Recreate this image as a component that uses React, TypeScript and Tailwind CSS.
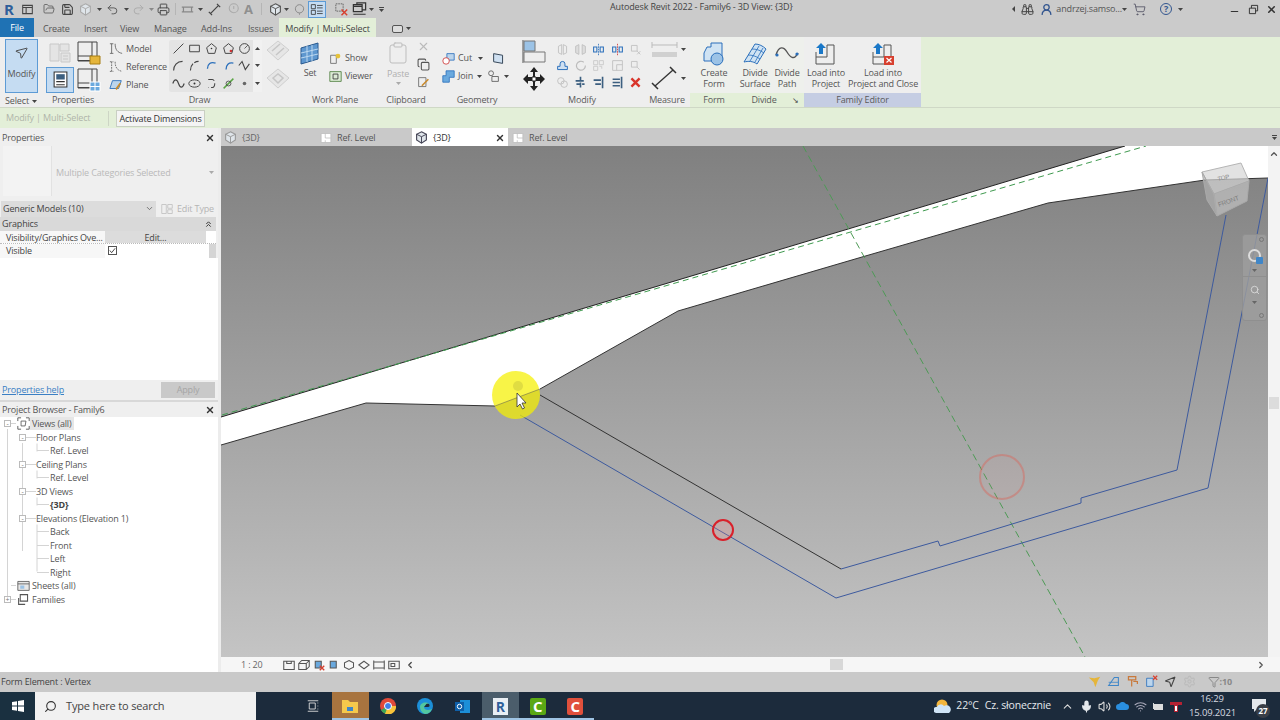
import React from "react";
import {
  Binoculars,
  ChevronLeft,
  ChevronRight,
  ChevronUp,
  Clipboard,
  Copy,
  Filter,
  FolderOpen,
  Minus,
  Mic,
  MousePointer2,
  Printer,
  Redo2,
  Save,
  Search,
  Settings,
  ShoppingCart,
  Undo2,
  UserRound,
  Volume2,
  Wifi,
  X,
} from "lucide-react";

type IcProps = { w?: number; h?: number; children: React.ReactNode };

const Ic = ({ w = 16, h = 16, children }: IcProps) => (
  <svg width={w} height={h} viewBox="0 0 16 16" fill="none" className="block shrink-0">
    {children}
  </svg>
);

const Caret = ({ c = "#444" }: { c?: string }) => (
  <svg width="5" height="3" viewBox="0 0 5 3" className="block shrink-0">
    <path d="M0 0h5L2.5 3z" fill={c} />
  </svg>
);

// toolbar + ribbon drawings
const Cube3D = ({ c = "#555" }: { c?: string }) => (
  <Ic w={13} h={13}>
    <path d="M8 1 14 4v7l-6 4-6-4V4z" fill="#dfe5ea" stroke={c} strokeWidth="1.4" />
    <path d="M2 4l6 3 6-3M8 7v8" stroke={c} strokeWidth="1.2" />
  </Ic>
);
const PlanDoc = () => (
  <Ic w={12} h={12}>
    <path d="M1.5 2h13v12h-13z" fill="#fff" stroke="#bbb" />
    <path d="M7 2v6h7.5M7 11v3" stroke="#bbb" />
  </Ic>
);
const WinPanels = ({ badge }: { badge?: React.ReactNode }) => (
  <svg width="24" height="24" viewBox="0 0 24 24" fill="none" className="block shrink-0">
    <path d="M1 1h14v14H1z" fill="#eee" stroke="#444" />
    <path d="M15 1h5v17M1 15v5h17" stroke="#444" />
    <path d="M1 19.5h12" stroke="#444" />
    {badge}
  </svg>
);
const GhostStack = () => (
  <svg width="24" height="23" viewBox="0 0 24 23" fill="none" className="block shrink-0">
    <path d="M2 3h9v17H2zM12 3h9v7h-9zM13 12h9v9h-9z" fill="#e4e4e4" stroke="#c8c8c8" />
    <path d="M15 15h5M15 18h5" stroke="#c8c8c8" />
  </svg>
);
const GhostPlane = ({ alt }: { alt?: boolean }) => (
  <svg width="24" height="23" viewBox="0 0 24 23" fill="none" className="block shrink-0">
    <path d="M1 11 12 2l11 9-11 10z" fill="#e6e6e6" stroke="#cfcfcf" />
    <path d={alt ? "M7 11l5-4 5 4-5 5z" : "M6 12l8-7M10 16l8-7"} stroke="#c6c6c6" strokeWidth="1.5" />
  </svg>
);
const ModelLine = ({ dash }: { dash?: boolean }) => (
  <Ic w={14} h={14}>
    <path d="M3 2v11M1 2h4M1 13h4" stroke="#666" strokeDasharray={dash ? "2 1" : undefined} />
    <path d="M7 2c0 7 3 10 8 11" stroke="#666" strokeDasharray={dash ? "2 1" : undefined} />
  </Ic>
);

const drawGlyphs: React.ReactNode[] = [
  <path key="a" d="M2 14 14 2" stroke="#444" strokeWidth="1.2" />,
  <path key="b" d="M2 4h12v8H2z" stroke="#444" strokeWidth="1.2" />,
  <g key="c"><path d="M8 2l6 5-2 7H4L2 7z" stroke="#444" strokeWidth="1.2" /><circle cx="8" cy="8" r="1" fill="#333" /></g>,
  <g key="d"><path d="M8 2l6 5-2 7H4L2 7z" stroke="#444" strokeWidth="1.2" /><circle cx="11" cy="11" r="1.6" fill="#c33" /></g>,
  <g key="e"><circle cx="8" cy="8" r="6" stroke="#444" strokeWidth="1.2" /><path d="M8 8l4-4" stroke="#444" /></g>,
  <path key="f" d="M2 14C2 8 6 3 13 3" stroke="#444" strokeWidth="1.4" />,
  <path key="g" d="M3 14C3 8 7 3 13 3" stroke="#444" strokeWidth="1.4" strokeDasharray="9 2" />,
  <path key="h" d="M3 12C3 6 7 3 13 5" stroke="#2a6fbb" strokeWidth="1.6" />,
  <path key="i" d="M5 13C5 7 8 4 14 5" stroke="#2a6fbb" strokeWidth="1.6" />,
  <path key="j" d="M1 8l4-5 4 10 5-7" stroke="#444" strokeWidth="1.3" />,
  <path key="k" d="M1 8c2-6 5-6 7 0s5 6 7 0" stroke="#444" strokeWidth="1.4" />,
  <g key="l"><ellipse cx="8" cy="8" rx="7" ry="4.5" stroke="#444" strokeWidth="1.2" /><circle cx="8" cy="8" r="1.2" fill="#333" /></g>,
  <path key="m" d="M4 3h5c4 0 4 10 0 10H4" stroke="#444" strokeWidth="1.3" strokeDasharray="8 3" />,
  <g key="n"><path d="M2 14 14 2" stroke="#5aa544" strokeWidth="1.8" /><circle cx="8" cy="8" r="3" stroke="#444" /></g>,
  <circle key="o" cx="8" cy="8" r="2.2" fill="#666" />,
];

const modGlyphs: React.ReactNode[] = [
  <path key="1" d="M7 2 3 4v8l4 2zM9 2l4 2v8l-4 2z" stroke="#bbb" />,
  <path key="2" d="M6 2 2 4v8l4 2zM10 2l4 2v8l-4 2z" fill="#ddd" stroke="#bbb" />,
  <g key="3"><path d="M8 1v14" stroke="#2a6fbb" strokeDasharray="2 1" /><path d="M2 5h4v6H2zM10 5h4v6h-4z" stroke="#2a6fbb" strokeWidth="1.3" /></g>,
  <g key="4"><path d="M8 1v14" stroke="#c33" strokeDasharray="2 1" /><path d="M2 5h4v6H2zM10 5h4v6h-4z" stroke="#2a6fbb" strokeWidth="1.3" /></g>,
  <path key="5" d="M3 3h7v7H3zM10 10l4 4M14 10l-4 4" stroke="#c4c4c4" strokeWidth="1.2" />,
  <path key="6" d="M2 13h12V9h-3V6a3 3 0 0 0-6 0v3H2z" fill="#cfe0f1" stroke="#2a6fbb" strokeWidth="1.2" />,
  <path key="7" d="M12 4a5.5 5.5 0 1 0 2 4" stroke="#bbb" strokeWidth="1.4" />,
  <path key="8" d="M2 2h5v5H2zM9 2h5v5H9zM2 9h5v5H2zM9 9h3v3" stroke="#c6c6c6" />,
  <path key="9" d="M2 2h12v12H2zM7 7h7M7 7v7" stroke="#bdbdbd" />,
  <path key="10" d="M3 3h7v7H3z M10 10l3 3" stroke="#c4c4c4" strokeWidth="1.2" />,
  <g key="11"><circle cx="6" cy="6" r="4" stroke="#bbb" /><circle cx="10" cy="10" r="4" stroke="#bbb" /></g>,
  <path key="12" d="M8 1v14M2 6h10M3 10h10" stroke="#3c5f80" strokeWidth="2" strokeDasharray="6 1" />,
  <path key="13" d="M13 1v14M2 5h9M4 10h7" stroke="#3c5f80" strokeWidth="2" />,
  <path key="14" d="M13 1v14M2 4h9M2 8h9M2 12h9" stroke="#3c5f80" strokeWidth="2" />,
  <path key="15" d="M3 3l10 10M13 3 3 13" stroke="#d9352b" strokeWidth="3" />,
];

const Label = ({ children }: { children: React.ReactNode }) => (
  <div className="h-[14px] leading-[14px] text-center text-[9px] text-[#5a5a5a] whitespace-nowrap">{children}</div>
);

const RowTool = ({ icon, text }: { icon: React.ReactNode; text: string }) => (
  <div className="flex items-center gap-[3px] h-[18px] text-[9px] text-[#555]">
    {icon}
    <span className="whitespace-nowrap">{text}</span>
  </div>
);

const BigTool = ({ icon, lines, w }: { icon: React.ReactNode; lines: string[]; w: string }) => (
  <div className={`flex flex-col items-center shrink-0 pt-[3px] text-[9px] leading-[11px] text-[#555] ${w}`}>
    <div className="h-[27px] flex items-center justify-center">{icon}</div>
    <div className="text-center whitespace-nowrap">
      {lines.map((l) => (
        <div key={l}>{l}</div>
      ))}
    </div>
  </div>
);

const LoadIcon = ({ close }: { close?: boolean }) => (
  <svg width="24" height="24" viewBox="0 0 24 24" fill="none" className="block shrink-0">
    <path d="M2 10v12h18V3h-7" stroke="#555" />
    <path d="M13 3v12H2" stroke="#555" />
    <path d="M7 1 2 6h3v6h4V6h3z" fill="#1a78c8" />
    {close && <path d="M13 14h10v9H13z" fill="#d7402f" />}
    {close && <path d="M15.5 16l5 4.500M20.500 16l-5 4.500" stroke="#fff" strokeWidth="1.2" />}
  </svg>
);

function TitleBar() {
  return (
    <div className="h-[18px] flex items-center relative text-[#555]">
      <div className="flex items-center pl-[4px]">
        <span className="w-[11px] text-[15px] leading-[16px] font-bold text-[#2f5f9a]">R</span>
        <span className="ml-[7px]">
          <Ic w={11} h={11}><path d="M1 2h14v12H1zM1 5h14M6 5v9" stroke="#444" strokeWidth="1.5" /></Ic>
        </span>
        <FolderOpen size={12} strokeWidth={1.6} className="ml-[10px] text-[#555]" />
        <Save size={13} strokeWidth={2} className="ml-[6px] text-[#444]" />
        <span className="ml-[5px]"><Cube3D c="#aaa" /></span>
        <span className="ml-[5px]"><Caret /></span>
        <Undo2 size={13} strokeWidth={1.7} className="ml-[4px] text-[#555]" />
        <span className="ml-[5px]"><Caret /></span>
        <Redo2 size={13} strokeWidth={1.7} className="ml-[3px] text-[#aaa]" />
        <span className="ml-[4px]"><Caret c="#888" /></span>
        <Printer size={13} strokeWidth={1.7} className="ml-[3px] text-[#444]" />
        <span className="ml-[5px] h-[12px] w-px bg-[#b5b5b5]" />
        <span className="ml-[5px]">
          <Ic w={13} h={13}><path d="M1 5h14M1 11h14M3 5v6M13 5v6" stroke="#888" strokeWidth="1.5" /></Ic>
        </span>
        <span className="ml-[4px]"><Caret /></span>
        <span className="ml-[5px]">
          <Ic w={13} h={13}><path d="M3 13 13 3M1 11l4 4M11 1l4 4" stroke="#444" strokeWidth="1.5" /></Ic>
        </span>
        <span className="ml-[6px]">
          <Ic w={12} h={12}><circle cx="9" cy="7" r="6" stroke="#aaa" strokeWidth="1.4" /><path d="M9 4v4" stroke="#aaa" strokeWidth="1.4" /></Ic>
        </span>
        <span className="ml-[5px] w-[12px] text-[13px] leading-[14px] font-bold text-[#8f8f8f]">A</span>
        <span className="ml-[5px] h-[12px] w-px bg-[#b5b5b5]" />
        <span className="ml-[7px]"><Cube3D /></span>
        <span className="ml-[2px]"><Caret /></span>
        <span className="ml-[5px]">
          <Ic w={11} h={11}><circle cx="8" cy="7" r="6" stroke="#888" strokeWidth="1.4" /><path d="M8 13v3" stroke="#888" /></Ic>
        </span>
        <span className="ml-[3px] w-[18px] h-[17px] bg-[#c5dcf2] border border-[#5d9bd5] flex items-center justify-center">
          <Ic w={14} h={13}><path d="M1 2h5v5H1zM1 9h5v5H1z" stroke="#333" /><path d="M8 3h7M8 6h7M8 10h7M8 13h7" stroke="#333" /></Ic>
        </span>
        <span className="ml-[9px]">
          <Ic w={13} h={13}><path d="M1 1h9v9H1z" stroke="#555" strokeDasharray="2 1" /><path d="M8 8l7 7M15 8l-7 7" stroke="#d7402f" strokeWidth="1.8" /></Ic>
        </span>
        <span className="ml-[4px]">
          <Ic w={15} h={14}><path d="M1 3h10v8H1zM5 3V1h10v8h-4M1 5h10M1 14h14" stroke="#333" strokeWidth="1.4" /></Ic>
        </span>
        <span className="ml-[2px]"><Caret /></span>
        <span className="ml-[5px] flex flex-col gap-[1px]">
          <span className="block w-[5px] h-px bg-[#444]" />
          <Caret />
        </span>
      </div>
      <div className="absolute left-[610px] top-[1px] text-[9px] leading-[12px] text-[#444] whitespace-nowrap">
        Autodesk Revit 2022 - Family6 - 3D View: {"{3D}"}
      </div>
      <div className="ml-auto flex items-center pr-[3px]">
        <span className="w-0 h-0 border-y-[3px] border-y-transparent border-r-[3px] border-r-[#444]" />
        <Binoculars size={13} strokeWidth={1.8} className="ml-[6px] text-[#444]" />
        <UserRound size={13} strokeWidth={2.4} className="ml-[6px] text-[#33568f]" />
        <span className="ml-[3px] text-[9px] text-[#555] whitespace-nowrap">andrzej.samso...</span>
        <Caret />
        <ShoppingCart size={13} strokeWidth={1.6} className="ml-[6px] text-[#556]" />
        <span className="ml-[14px] w-[12px] h-[12px] rounded-full border border-[#33568f] text-[9px] leading-[10px] text-center text-[#33568f] font-bold">?</span>
        <span className="ml-[6px]"><Caret /></span>
        <Minus size={11} strokeWidth={2.6} className="ml-[46px] mt-[5px] text-[#333]" />
        <span className="ml-[8px]">
          <Ic w={11} h={11}><path d="M2 6h9v8H2zM5 6V2h9v8h-3" stroke="#333" strokeWidth="1.4" /></Ic>
        </span>
        <X size={11} strokeWidth={3.4} className="ml-[7px] text-[#333]" />
      </div>
    </div>
  );
}

function RibbonTabs() {
  const tabs = [
    { t: "Create", c: "w-[41px]" },
    { t: "Insert", c: "w-[36px]" },
    { t: "View", c: "w-[34px]" },
    { t: "Manage", c: "w-[47px]" },
    { t: "Add-Ins", c: "w-[47px]" },
    { t: "Issues", c: "w-[31px]" },
  ];
  return (
    <div className="h-[19px] flex items-stretch text-[9px] text-[#555]">
      <div className="w-[34px] bg-[#1f72b4] text-white text-center leading-[20px]">File</div>
      <div className="w-[9px]" />
      {tabs.map((x) => (
        <div key={x.t} className={`${x.c} leading-[22px] whitespace-nowrap`}>{x.t}</div>
      ))}
      <div className="w-[97px] bg-[#e3efd8] text-center leading-[22px] text-[#444] whitespace-nowrap">Modify | Multi-Select</div>
      <div className="ml-[16px] flex items-center gap-[3px] pt-[2px]">
        <span className="w-[11px] h-[8px] rounded-[2px] border border-[#555] bg-[#ddd]" />
        <Caret />
      </div>
    </div>
  );
}

function Ribbon() {
  return (
    <div className="h-[71px] flex items-stretch bg-[#e3efd8] border-b border-[#cfd8c6] text-[#555]">
      {/* Select */}
      <div className="w-[46px] bg-[#eeeeee] pl-[5px] pt-[2px]">
        <div className="w-[33px] h-[54px] bg-[#c5dcf2] border border-[#5d9bd5] flex flex-col items-center pt-[5px] text-[9px] leading-[11px]">
          <MousePointer2 size={15} strokeWidth={1.4} className="text-[#444] -scale-x-100 rotate-[8deg]" />
          <span className="mt-[8px]">Modify</span>
        </div>
        <div className="mt-[1px] flex items-center gap-[3px] h-[14px] text-[9px] whitespace-nowrap">
          Select <Caret />
        </div>
      </div>
      {/* Properties */}
      <div className="w-[59px] bg-[#eeeeee]">
        <div className="h-[56px] grid grid-cols-[31px_24px] grid-rows-[27px_27px] items-center pt-[2px]">
          <div className="pl-[2px]"><GhostStack /></div>
          <WinPanels badge={<path d="M13 15h10v8H13z" fill="#e5b53a" stroke="#a67c12" />} />
          <div className="w-[28px] h-[26px] bg-[#c5dcf2] border border-[#5d9bd5] flex items-center justify-center">
            <Ic w={17} h={19}><path d="M2 1h12v14H2z" fill="#fff" stroke="#333" /><path d="M4 3h8v5H4z" fill="#3c5f80" /><path d="M4 10h8M4 13h8" stroke="#333" /></Ic>
          </div>
          <WinPanels badge={<path d="M13 14h10v9H13z M18 14v9M13 18.500h10" fill="#6aa9de" stroke="#fff" />} />
        </div>
        <div className="pr-[5px]"><Label>Properties</Label></div>
      </div>
      {/* Draw */}
      <div className="w-[189px] bg-[#eeeeee]">
        <div className="h-[56px] flex">
          <div className="w-[64px] pl-[4px] pt-[3px]">
            <RowTool icon={<ModelLine />} text="Model" />
            <RowTool icon={<ModelLine dash />} text="Reference" />
            <RowTool icon={<Ic w={14} h={14}><path d="M4 3h10l-3 9H1z" fill="#bcd5ec" stroke="#2a6fbb" /><path d="M8 13l5-7" stroke="#c98a2b" strokeWidth="2" /></Ic>} text="Plane" />
          </div>
          <div className="w-[93px] h-[52px] mt-[3px] bg-[#e4e4e4] rounded-[2px] flex">
            <div className="w-[84px] grid grid-cols-5 grid-rows-3 place-items-center pl-[1px]">
              {drawGlyphs.map((g, i) => (
                <Ic key={i} w={13} h={13}>{g}</Ic>
              ))}
            </div>
            <div className="w-[9px] bg-[#f1f1f1] flex flex-col justify-around items-center">
              <span className="rotate-180"><Caret /></span>
              <Caret />
              <Caret />
            </div>
          </div>
          <div className="ml-[4px] pt-[2px] flex flex-col gap-[5px]">
            <GhostPlane />
            <GhostPlane alt />
          </div>
        </div>
        <Label>Draw</Label>
      </div>
      {/* Work Plane */}
      <div className="w-[82px] bg-[#eeeeee]">
        <div className="h-[56px] flex">
          <BigTool
            w="w-[32px]"
            icon={
              <svg width="22" height="23" viewBox="0 0 22 23" className="block">
                <path d="M2 6 19 1v16L2 22z" fill="#5e97cf" stroke="#28598f" />
                <path d="M8 4v16M13 3v16M2 11l17-4M2 16l17-4" stroke="#bcd8f0" />
              </svg>
            }
            lines={["Set"]}
          />
          <div className="pt-[12px] ml-[3px]">
            <RowTool icon={<Ic w={13} h={13}><path d="M2 4h7v10H2z" stroke="#666" /><circle cx="11" cy="5" r="3" fill="#e5c23a" /></Ic>} text="Show" />
            <RowTool icon={<Ic w={13} h={13}><path d="M1 2h14v12H1z" fill="#dcebd5" stroke="#4a7a3a" /><path d="M5 5h6v6H5z" stroke="#333" /></Ic>} text="Viewer" />
          </div>
        </div>
        <Label>Work Plane</Label>
      </div>
      {/* Clipboard */}
      <div className="w-[60px] bg-[#eeeeee]">
        <div className="h-[56px] flex">
          <div className="ml-[7px] w-[30px] flex flex-col items-center pt-[4px] text-[9px] leading-[11px] text-[#b0b0b0]">
            <Clipboard size={24} strokeWidth={1} className="text-[#bdbdbd]" />
            <span className="mt-[3px]">Paste</span>
            <span className="mt-[3px]"><Caret c="#aaa" /></span>
          </div>
          <div className="ml-[4px] pt-[3px] flex flex-col gap-[5px] text-[#bbb]">
            <X size={13} />
            <Copy size={13} className="text-[#555]" />
            <Ic w={13} h={13}><path d="M2 2h9v11H2z" stroke="#666" /><path d="M6 12l8-8" stroke="#c98a2b" strokeWidth="2" /></Ic>
          </div>
        </div>
        <Label>Clipboard</Label>
      </div>
      {/* Geometry */}
      <div className="w-[82px] bg-[#eeeeee]">
        <div className="h-[56px] pl-[6px] pt-[12px]">
          <div className="flex items-center">
            <RowTool icon={<Ic w={13} h={13}><path d="M6 2h9v8H6z" fill="#bcd5ec" stroke="#2a6fbb" /><circle cx="5" cy="11" r="4" fill="#fff" stroke="#c33" /></Ic>} text="Cut" />
            <span className="ml-[6px]"><Caret /></span>
            <span className="ml-[9px]">
              <Ic w={13} h={13}><path d="M2 2l11 2v10L2 12z" fill="#cfe0f1" stroke="#345" strokeWidth="1.2" /></Ic>
            </span>
          </div>
          <div className="flex items-center">
            <RowTool icon={<Ic w={13} h={13}><path d="M5 1h10v8H9v6H1V7h4z" fill="#6aa9de" stroke="#2a6fbb" /></Ic>} text="Join" />
            <span className="ml-[4px]"><Caret /></span>
            <span className="ml-[5px]">
              <Ic w={13} h={13}><circle cx="5" cy="4" r="3" stroke="#555" /><path d="M6 8h8v6H6z" stroke="#555" /></Ic>
            </span>
            <span className="ml-[4px]"><Caret /></span>
          </div>
        </div>
        <Label>Geometry</Label>
      </div>
      {/* Modify */}
      <div className="w-[128px] bg-[#eeeeee]">
        <div className="h-[56px] flex">
          <div className="ml-[4px] pt-[3px] flex flex-col gap-[4px]">
            <svg width="24" height="23" viewBox="0 0 24 23" fill="none" className="block">
              <path d="M1 0v23" stroke="#555" />
              <path d="M2 1h11v10H2z" fill="#9cc3e6" stroke="#777" />
              <path d="M2 12h21v10H2z" fill="#eee" stroke="#777" />
            </svg>
            <svg width="24" height="24" viewBox="0 0 24 24" className="block">
              <path d="M12 0l4 5h-3v5h5V7l5 5-5 5v-3h-5v5h3l-4 5-4-5h3v-5H6v3l-5-5 5-5v3h5V5H8z" fill="#222" />
              <path d="M10 10h4v4h-4z" fill="#fff" stroke="#222" />
            </svg>
          </div>
          <div className="ml-[7px] mt-[4px] w-[92px] h-[50px] grid grid-cols-5 grid-rows-3 place-items-center">
            {modGlyphs.map((g, i) => (
              <Ic key={i} w={13} h={13}>{g}</Ic>
            ))}
          </div>
        </div>
        <Label>Modify</Label>
      </div>
      {/* Measure */}
      <div className="w-[44px] bg-[#eeeeee]">
        <div className="h-[56px] pl-[5px] pt-[4px]">
          <div className="flex items-center gap-[3px]">
            <svg width="27" height="17" viewBox="0 0 27 17" fill="none" className="block">
              <path d="M1 4h25M1 1v6M26 1v6" stroke="#bbb" />
              <path d="M1 11h25v5H1z" fill="#d0d0d0" />
            </svg>
            <Caret />
          </div>
          <div className="mt-[8px] flex items-center gap-[3px]">
            <svg width="27" height="24" viewBox="0 0 27 24" fill="none" className="block">
              <path d="M4 20 22 4" stroke="#333" strokeWidth="1.3" />
              <path d="M1 17l6 6M19 1l6 6" stroke="#333" strokeWidth="1.5" />
            </svg>
            <Caret />
          </div>
        </div>
        <div className="pr-[2px]"><Label>Measure</Label></div>
      </div>
      {/* Form */}
      <div className="w-[48px]">
        <div className="h-[56px] bg-[#eef0ec] flex justify-center">
          <BigTool
            w="w-[40px]"
            icon={
              <svg width="24" height="24" viewBox="0 0 24 24" className="block">
                <path d="M9 1h11v18H2v-8l3-6h4z" fill="#cfe3f3" stroke="#2a6fbb" />
                <circle cx="15" cy="17" r="6" fill="#9cc3e6" stroke="#2a6fbb" />
              </svg>
            }
            lines={["Create", "Form"]}
          />
        </div>
        <Label>Form</Label>
      </div>
      {/* Divide */}
      <div className="w-[66px]">
        <div className="h-[56px] bg-[#eef0ec] flex">
          <BigTool
            w="w-[34px]"
            icon={
              <svg width="24" height="22" viewBox="0 0 24 22" fill="none" className="block">
                <path d="M1 19 12 1c4 0 8 2 11 5L14 21c-4-3-9-3-13-2z" fill="#cfe3f3" stroke="#2a6fbb" />
                <path d="M5 12c4 0 8 1 12 4M9 6c4 0 8 1 12 4M7 18 16 3M12 19 20 5" stroke="#2a6fbb" strokeWidth=".8" />
              </svg>
            }
            lines={["Divide", "Surface"]}
          />
          <BigTool
            w="w-[30px]"
            icon={
              <svg width="24" height="16" viewBox="0 0 24 16" fill="none" className="block">
                <path d="M1 9c3-10 8-8 11-3s7 9 11 1" stroke="#555" strokeWidth="1.4" />
                <circle cx="2" cy="9" r="1.6" fill="#2a6fbb" />
                <circle cx="22" cy="8" r="1.6" fill="#2a6fbb" />
              </svg>
            }
            lines={["Divide", "Path"]}
          />
        </div>
        <div className="relative pr-[14px]"><Label>Divide</Label><span className="absolute right-[5px] top-[2px] text-[8px] leading-[10px] text-[#444]">↘</span></div>
      </div>
      {/* Family Editor */}
      <div className="w-[117px] bg-[#eeeeee]">
        <div className="h-[56px] flex">
          <BigTool w="w-[44px]" icon={<LoadIcon />} lines={["Load into", "Project"]} />
          <BigTool w="w-[70px]" icon={<LoadIcon close />} lines={["Load into", "Project and Close"]} />
        </div>
        <div className="bg-[#c5cde3] h-[14px]"><Label>Family Editor</Label></div>
      </div>
    </div>
  );
}

function TabIcon({ cube, active }: { cube?: boolean; active?: boolean }) {
  return cube ? <Cube3D c={active ? "#445" : "#999"} /> : <PlanDoc />;
}

function ViewTabs() {
  return (
    <div className="h-[18px] flex items-stretch text-[9px] text-[#555] bg-[#c9c9c9]">
      <div className="w-[95px] flex items-center pl-[3px] pt-px gap-[5px] text-[#666]"><TabIcon cube />{"{3D}"}</div>
      <div className="w-[96px] flex items-center pl-[4px] pt-px gap-[5px]"><TabIcon />Ref. Level</div>
      <div className="w-[96px] bg-white flex items-center pl-[3px] pt-px gap-[5px] text-[#333]">
        <TabIcon cube active />{"{3D}"}
        <X size={10} strokeWidth={3.4} className="ml-auto mr-[3px] text-[#333]" />
      </div>
      <div className="w-[96px] flex items-center pl-[4px] pt-px gap-[5px]"><TabIcon />Ref. Level</div>
      <div className="ml-auto pr-[3px] flex flex-col justify-center gap-px items-center">
        <span className="block w-[5px] h-px bg-[#444]" />
        <Caret />
      </div>
    </div>
  );
}

function PanelHead({ title }: { title: string }) {
  return (
    <div className="h-[14px] flex items-center justify-between pl-[2px] pr-[3px] text-[9px] text-[#555]">
      {title}
      <X size={10} strokeWidth={3.4} className="text-[#333]" />
    </div>
  );
}

function PropertiesPanel() {
  return (
    <div className="h-[274px] flex flex-col bg-[#efefef] text-[9px] text-[#555] border-b-2 border-[#d8d8d8]">
      <div className="pt-[3px]"><PanelHead title="Properties" /></div>
      <div className="h-[55px] flex">
        <div className="ml-[3px] mt-[1px] w-[49px] h-[50px] bg-[#f3f3f3] border-r border-[#e2e2e2]" />
        <div className="flex-1 flex items-center justify-between pl-[4px] pr-[4px] text-[#b9b9b9]">
          Multiple Categories Selected
          <Caret c="#aaa" />
        </div>
      </div>
      <div className="h-[17px] flex items-center">
        <div className="w-[155px] h-[16px] ml-[1px] bg-[#dcdcdc] flex items-center justify-between px-[2px] text-[#444]">
          Generic Models (10)
          <ChevronLeft size={9} className="-rotate-90 text-[#555]" />
        </div>
        <div className="ml-[5px] flex items-center gap-[4px] text-[#b5b5b5]">
          <Ic w={12} h={12}><path d="M1 2h6v12H1zM9 2h6v5H9zM9 9h6v5H9z" stroke="#bbb" /></Ic>
          Edit Type
        </div>
      </div>
      <div className="h-[14px] mr-[2px] bg-[#d9d9d9] flex items-center justify-between px-[2px] text-[#444]">
        Graphics
        <span className="mr-[2px]">
          <Ic w={7} h={8}><path d="M3 8l5-5 5 5M3 14l5-5 5 5" stroke="#333" strokeWidth="2.200" /></Ic>
        </span>
      </div>
      <div className="h-[13px] mr-[2px] flex bg-white border-b border-dotted border-[#bbb] text-[#444]">
        <div className="w-[105px] pl-[6px] bg-[#f7f7f7] whitespace-nowrap leading-[13px]">Visibility/Graphics Ove...</div>
        <div className="w-[101px] bg-[#dcdcdc] text-center leading-[13px]">Edit...</div>
      </div>
      <div className="h-[14px] mr-[2px] flex bg-white text-[#444] relative">
        <div className="w-[105px] pl-[6px] bg-[#f7f7f7] leading-[13px]">Visible</div>
        <div className="ml-[3px] mt-[2px] w-[9px] h-[9px] border border-[#555] bg-white flex items-center justify-center">
          <Ic w={7} h={7}><path d="M2 8l4 5 8-10" stroke="#333" strokeWidth="2" /></Ic>
        </div>
        <div className="absolute right-0 top-0 w-[7px] h-[14px] bg-[#d5d5d5]" />
      </div>
      <div className="flex-1 bg-white" />
      <div className="h-[20px] flex items-center justify-between pl-[2px] pr-[3px]">
        <span className="text-[#3b7fc4] underline">Properties help</span>
        <div className="w-[54px] h-[16px] bg-[#c9c9c9] text-center leading-[16px] text-[#a5a5a5]">Apply</div>
      </div>
    </div>
  );
}

type TreeItem = { t: string; d: number; exp?: "-" | "+"; icon?: React.ReactNode; bold?: boolean; sel?: boolean };

const treeItems: TreeItem[] = [
  {
    t: "Views (all)",
    d: 0,
    exp: "-",
    sel: true,
    icon: <Ic w={13} h={13}><path d="M1 5V1h4M11 1h4v4M15 11v4h-4M5 15H1v-4" stroke="#444" /><path d="M5 5h6l-1 6H5z" stroke="#555" /></Ic>,
  },
  { t: "Floor Plans", d: 1, exp: "-" },
  { t: "Ref. Level", d: 2 },
  { t: "Ceiling Plans", d: 1, exp: "-" },
  { t: "Ref. Level", d: 2 },
  { t: "3D Views", d: 1, exp: "-" },
  { t: "{3D}", d: 2, bold: true },
  { t: "Elevations (Elevation 1)", d: 1, exp: "-" },
  { t: "Back", d: 2 },
  { t: "Front", d: 2 },
  { t: "Left", d: 2 },
  { t: "Right", d: 2 },
  {
    t: "Sheets (all)",
    d: 0,
    icon: <Ic w={13} h={13}><path d="M1 3h14v11H1zM1 6h14" fill="#e8e8e8" stroke="#555" /><path d="M4 8h5v4H4z" fill="#9cc3e6" /></Ic>,
  },
  {
    t: "Families",
    d: 0,
    exp: "+",
    icon: <Ic w={13} h={13}><path d="M4 2h9v8H4zM2 6v8h8" stroke="#555" strokeWidth="1.3" /></Ic>,
  },
];

function ProjectBrowser() {
  return (
    <div className="flex-1 flex flex-col bg-white text-[9px] text-[#555]">
      <div className="bg-[#efefef] pt-px"><PanelHead title="Project Browser - Family6" /></div>
      <div className="relative">
        {/* tree guide lines */}
        <svg className="absolute left-0 top-0 pointer-events-none" width="60" height="190" fill="none">
          <path d="M7.5 12v173M22.5 26v108M37 26.500v8M37 53.500v8M37 80.500v8M37 107.500v47" stroke="#d4d4d4" />
        </svg>
        {treeItems.map((item, i) => (
          <div key={i} className="h-[13.5px] flex items-center relative">
            {item.d === 0 && (
              <>
                <span className="w-[4px]" />
                <span className={`w-[7px] h-[7px] border border-[#bbb] bg-white text-[7px] leading-[5px] text-center text-[#777] ${item.exp ? "" : "invisible"}`}>{item.exp === "+" ? "+" : "-"}</span>
                <span className="w-[5px] h-px bg-[#d4d4d4]" />
                <span className="ml-[1px] w-[13px]">{item.icon}</span>
                <span className={`px-[2px] leading-[13px] ${item.sel ? "bg-[#e6e6e6]" : ""}`}>{item.t}</span>
              </>
            )}
            {item.d === 1 && (
              <>
                <span className="w-[19px]" />
                <span className="w-[7px] h-[7px] border border-[#bbb] bg-white text-[7px] leading-[5px] text-center text-[#777]">-</span>
                <span className="w-[10px] h-px bg-[#d4d4d4]" />
                <span>{item.t}</span>
              </>
            )}
            {item.d === 2 && (
              <>
                <span className="w-[37px]" />
                <span className="w-[12px] h-px bg-[#d4d4d4]" />
                <span className={`ml-[1px] ${item.bold ? "font-bold text-[#444]" : ""}`}>{item.t}</span>
              </>
            )}
          </div>
        ))}
      </div>
    </div>
  );
}

function Canvas() {
  return (
    <div className="flex-1 min-w-0 relative bg-gradient-to-b from-[#808080] to-[#c4c4c4] overflow-hidden">
      <svg width="1047" height="511" viewBox="221 146 1047 511" fill="none" className="block">
        <path d="M221 417 1125 146H1268V178L1205 180 1048 203 862 257 678 311 540 389 495 406 366 403 221 445Z" fill="#fff" />
        <path d="M221 417 1125 146" stroke="#222" strokeWidth="1" />
        <path d="M221 445 366 403 495 406M540 389 678 311 862 257 1048 203 1205 180 1268 178" stroke="#333" strokeWidth="1" />
        <path d="M222 415 1146 146" stroke="#3f9a4f" strokeWidth="1" strokeDasharray="6 4" />
        <path d="M803 146 1085 657" stroke="#4d9a55" strokeWidth="1" strokeDasharray="7 4" />
        <path d="M540 395 841 569" stroke="#333" strokeWidth="1" />
        <path d="M841 569 938 541 940 546 1081 503 1081 498 1177 470 1226 215" stroke="#3d5a9e" strokeWidth="1" />
        <path d="M520 415 836 598 1208 488 1268 178" stroke="#3d5a9e" strokeWidth="1" />
        <circle cx="516" cy="395" r="24" fill="#f5f000" fillOpacity="0.72" />
        <circle cx="518" cy="386" r="5" fill="#b5b33a" fillOpacity="0.35" />
        <path d="M495 406 540 389" stroke="#555" strokeOpacity="0.5" />
        <path d="M517 393v14l3-3 2.500 5 2-1-2.500-5h4z" fill="#fff" stroke="#333" strokeWidth="0.8" />
        <circle cx="723" cy="530" r="10" fill="#ff8a8a" fillOpacity="0.2" stroke="#d9202a" strokeWidth="2" />
        <circle cx="1002" cy="477" r="22" fill="#ff8a8a" fillOpacity="0.05" stroke="#d9655c" strokeOpacity="0.45" strokeWidth="2" />
        {/* view cube */}
        <path d="M1202 172 1241 163 1249 181 1214 194Z" fill="#d6d6d6" fillOpacity="0.7" stroke="#b5b5b5" />
        <path d="M1214 194 1249 181 1247 201 1217 216Z" fill="#bdbdbd" fillOpacity="0.75" stroke="#aaa" />
        <path d="M1202 172 1214 194 1217 216 1207 200Z" fill="#b0b0b0" fillOpacity="0.7" stroke="#aaa" />
        <text x="1218" y="181" fontSize="6" fill="#8a8a8a" transform="rotate(-12 1218 181)" fontFamily="Liberation Sans, sans-serif">TOP</text>
        <text x="1219" y="207" fontSize="6.500" fill="#7d7d7d" transform="rotate(-20 1219 207)" fontFamily="Liberation Sans, sans-serif">FRONT</text>
      </svg>
      {/* navigation bar */}
      <div className="absolute left-[1021px] top-[88px] w-[25px] h-[87px] rounded-[3px] bg-[#9e9e9e]/80 border border-[#8f8f8f] flex flex-col items-center pt-[14px]">
        <span className="absolute right-[2px] top-[2px] w-[5px] h-[5px] rounded-full border border-[#777]" />
        <span className="relative w-[13px] h-[13px] rounded-full border-2 border-[#ddd]">
          <span className="absolute right-[-4px] bottom-[-4px] w-[7px] h-[7px] rounded-[1px] bg-[#3f86c8]" />
        </span>
        <span className="mt-[7px]"><Caret c="#666" /></span>
        <span className="mt-[4px] w-full h-px bg-[#8f8f8f]" />
        <Search size={10} className="mt-[8px] text-[#ddd]" />
        <span className="mt-[6px]"><Caret c="#666" /></span>
        <span className="absolute right-[2px] bottom-[2px] w-[5px] h-[5px] rounded-full border border-[#777]" />
      </div>
    </div>
  );
}

function ViewArea() {
  return (
    <div className="flex-1 min-w-0 flex flex-col">
      <ViewTabs />
      <div className="h-[511px] flex">
        <Canvas />
        <div className="w-[12px] bg-[#f3f3f3] flex flex-col items-center pt-[3px]">
          <ChevronUp size={10} strokeWidth={3} className="text-[#555]" />
          <div className="mt-[238px] w-[10px] h-[12px] bg-[#dcdcdc]" />
        </div>
      </div>
      <div className="flex-1 flex items-center bg-[#f6f6f6] text-[9px] text-[#555]">
        <span className="ml-[20px] w-[42px] text-[#666]">1 : 20</span>
        <span className="flex items-center gap-[3px]">
          {[0, 1, 2, 3, 4, 5, 6, 7].map((i) => (
            <Ic key={i} w={12} h={12}>
              <path
                d={["M1 3h14v11H1zM5 3v3h6V3", "M1 6l4-4h10v8l-4 4H1zM1 6h10v8M11 6l4-4", "M3 3h8v9H3z", "M3 3h8v9H3z", "M8 2l6 3v6l-6 3-6-3V5z", "M1 8l7-5 7 5-7 5z", "M1 2v12M15 2v12M1 4h14M1 12h14", "M1 3h14v10H1zM4 6h5v4H4z"][i]}
                fill={i === 2 || i === 3 ? "#6aa9de" : "none"}
                stroke="#555"
                strokeWidth="1.400"
              />
              {i === 2 && <path d="M9 9l6 6M15 9l-6 6" stroke="#d7402f" strokeWidth="1.800" />}
            </Ic>
          ))}
        </span>
        <ChevronLeft size={10} strokeWidth={3} className="ml-[5px] text-[#444]" />
        <div className="ml-[415px] w-[13px] h-[11px] bg-[#d8d8d8]" />
        <ChevronRight size={10} strokeWidth={3} className="ml-[413px] text-[#555]" />
      </div>
    </div>
  );
}

function StatusBar() {
  return (
    <div className="h-[20px] bg-[#c9c9c9] flex items-center pl-px pb-px text-[9px] text-[#444]">
      Form Element : Vertex
      <div className="ml-auto pr-[48px] flex items-center gap-[6px]">
        <Ic w={13} h={13}><path d="M1 3l7 1 7-2-3 5-3 8-2-6z" fill="#e5b53a" /></Ic>
        <Ic w={13} h={13}><path d="M2 13 9 3h5v10z" stroke="#3f86c8" strokeWidth="1.300" /><path d="M2 9h12" stroke="#3f86c8" /></Ic>
        <Ic w={13} h={13}><path d="M3 2h9v4H3zM7 6v8M9 8h5v3" stroke="#c9793b" strokeWidth="1.500" /></Ic>
        <Ic w={13} h={13}><path d="M2 4h8v10H2z" fill="#bcd5ec" stroke="#2a6fbb" /><path d="M10 1l5 5M15 1l-5 5" stroke="#d7402f" strokeWidth="1.600" /></Ic>
        <MousePointer2 size={13} className="-scale-x-100 text-[#444]" />
        <Settings size={13} className="text-[#bcbcbc]" />
        <div className="ml-[6px] flex items-center text-[#888]">
          <Filter size={12} className="text-[#888]" />
          <span className="font-bold">:10</span>
        </div>
      </div>
    </div>
  );
}

function TaskCell({ children, bg, bar }: { children: React.ReactNode; bg?: string; bar?: boolean }) {
  return (
    <div className={`relative w-[37.5px] h-full flex items-center justify-center ${bg ?? ""}`}>
      {children}
      {bar && <span className="absolute bottom-0 inset-x-0 h-[2px] bg-[#9fc4e4]" />}
    </div>
  );
}

function Taskbar() {
  return (
    <div className="h-[28px] bg-[#1c2b3c] flex items-stretch text-white">
      <div className="w-[35px] bg-[#1a3040] flex items-center justify-center">
        <svg width="12" height="12" viewBox="0 0 12 12" className="block"><path d="M0 2l5-.7V5.500H0zM6 1.100 12 0v5.500H6zM0 6.500h5v4.300l-5-.7zM6 6.500h6V12l-6-1z" fill="#fff" /></svg>
      </div>
      <div className="w-[221px] bg-[#f1f1f1] flex items-center pl-[9px] text-[11px] text-[#444]">
        <Search size={13} className="-scale-x-100 text-[#333]" />
        <span className="ml-[9px]">Type here to search</span>
      </div>
      <div className="w-[38px]" />
      <TaskCell>
        <Ic w={12} h={14}><path d="M3 4h8v8H3zM1 1h14M1 15h14M14 4h1M14 8h1M14 12h1" stroke="#ddd" strokeWidth="1.200" /></Ic>
      </TaskCell>
      <TaskCell bg="bg-[#a8743f]" bar>
        <svg width="16" height="14" viewBox="0 0 16 14" className="block"><path d="M0 1h6l2 2h8v11H0z" fill="#f5c84c" /><path d="M5 8h6v4H5z" fill="#3f86c8" /></svg>
      </TaskCell>
      <TaskCell>
        <svg width="16" height="16" viewBox="0 0 16 16" className="block">
          <circle cx="8" cy="8" r="8" fill="#e04a3a" />
          <path d="M8 8 1 12a8 8 0 0 0 7 4z" fill="#3aa757" />
          <path d="M8 8l-3 8a8 8 0 0 0 11-8z" fill="#f8c43a" />
          <circle cx="8" cy="8" r="3.500" fill="#3f7fe8" stroke="#fff" />
        </svg>
      </TaskCell>
      <TaskCell>
        <svg width="16" height="16" viewBox="0 0 16 16" className="block">
          <circle cx="8" cy="8" r="8" fill="#1c8fd8" />
          <path d="M3 9c0-4 6-6 9-3 1 1 1 3-1 3H7c0 3 4 4 8 2-1 3-4 5-7 5-3-1-5-4-5-7z" fill="#52c7a0" />
          <path d="M7 9h4c2 0 2-2 1-3-1-.5-3-.5-3 .5" fill="#1c2b3c" />
        </svg>
      </TaskCell>
      <TaskCell>
        <svg width="16" height="15" viewBox="0 0 16 15" className="block">
          <path d="M5 1h10v13H5z" fill="#1c8fd8" />
          <path d="M0 3h9v9H0z" fill="#0f5fa8" />
          <circle cx="4.500" cy="7.500" r="2.200" fill="none" stroke="#fff" />
        </svg>
      </TaskCell>
      <TaskCell bg="bg-[#4b5d6b]" bar>
        <span className="w-[15px] h-[17px] bg-[#e9eef3] text-[#2f5f9a] text-[14px] leading-[17px] font-bold text-center">R</span>
      </TaskCell>
      <TaskCell bar>
        <span className="w-[16px] h-[17px] rounded-[2px] bg-[#5aa814] text-white text-[15px] leading-[17px] font-bold text-center">C</span>
      </TaskCell>
      <TaskCell bar>
        <span className="w-[16px] h-[17px] rounded-[2px] bg-[#e0503c] text-white text-[15px] leading-[17px] font-bold text-center">C</span>
      </TaskCell>
      <div className="ml-auto flex items-center pr-[14px] text-[#e4e8ec]">
        <svg width="17" height="16" viewBox="0 0 17 16" className="block">
          <circle cx="8" cy="7" r="5.500" fill="#f2b53c" />
          <path d="M2 15a3 3 0 0 1 1-6 4 4 0 0 1 7-1 3.500 3.500 0 0 1 5 7z" fill="#cfe4f6" />
        </svg>
        <span className="ml-[5px] text-[10.5px] whitespace-nowrap">22°C</span>
        <span className="ml-[6px] text-[10.5px] whitespace-nowrap">Cz. słonecznie</span>
        <ChevronUp size={13} className="ml-[10px] text-[#ddd]" />
        <Mic size={13} className="ml-[6px] text-[#e4e8ec]" fill="#e4e8ec" />
        <Volume2 size={13} className="ml-[5px] text-[#ddd]" />
        <svg width="13" height="8" viewBox="0 0 13 8" className="block ml-[5px]"><path d="M3 8a3 3 0 0 1 0-6 4 4 0 0 1 7 0 3 3 0 0 1 0 6z" fill="#2a8fe0" /></svg>
        <Wifi size={13} className="ml-[5px] text-[#aab]" />
        <svg width="13" height="9" viewBox="0 0 13 9" className="block ml-[5px]"><path d="M1 1h1v1h9v6H2V7H1z" fill="#ddd" /></svg>
        <svg width="12" height="13" viewBox="0 0 12 13" className="block ml-[5px]"><path d="M0 2h12v3H8v7H4V5H0z" fill="#b52233" /><path d="M5 6h2v5H5z" fill="#fff" /></svg>
        <div className="ml-[7px] w-[46px] text-center text-[9.500px] leading-[14px] text-[#d5dae0] whitespace-nowrap">
          <div>16:29</div>
          <div>15.09.2021</div>
        </div>
        <div className="relative ml-[17px] w-[14px] h-[14px]">
          <svg width="14" height="13" viewBox="0 0 14 13" className="block"><path d="M0 0h14v10H5l-3 3v-3H0z" fill="#e4e8ec" /></svg>
          <span className="absolute left-[4px] top-[5px] w-[14px] h-[14px] rounded-full bg-[#3a3f47] text-[8px] leading-[14px] text-center font-bold text-white">27</span>
        </div>
      </div>
    </div>
  );
}

export default function App() {
  return (
    <div className="w-[1280px] h-[720px] overflow-hidden flex flex-col bg-[#cbcbcb] font-['Open_Sans',sans-serif] tracking-[-0.15px]">
      <TitleBar />
      <RibbonTabs />
      <Ribbon />
      <div className="h-[20px] bg-[#e3efd8] flex items-center text-[9px] text-[#b0b5aa]">
        <span className="ml-[6px] w-[102px] whitespace-nowrap">Modify | Multi-Select</span>
        <span className="h-[15px] w-px bg-[#cdd5c5]" />
        <span className="ml-[7px] w-[89px] h-[17px] bg-[#f4f4f4] border border-[#c9cfc3] text-center leading-[15px] text-[#333] whitespace-nowrap">Activate Dimensions</span>
      </div>
      <div className="h-[544px] flex bg-[#d8d8d8]">
        <div className="w-[218px] flex flex-col bg-white">
          <PropertiesPanel />
          <ProjectBrowser />
        </div>
        <div className="w-[3px] bg-[#ececec]" />
        <ViewArea />
      </div>
      <StatusBar />
      <Taskbar />
    </div>
  );
}
